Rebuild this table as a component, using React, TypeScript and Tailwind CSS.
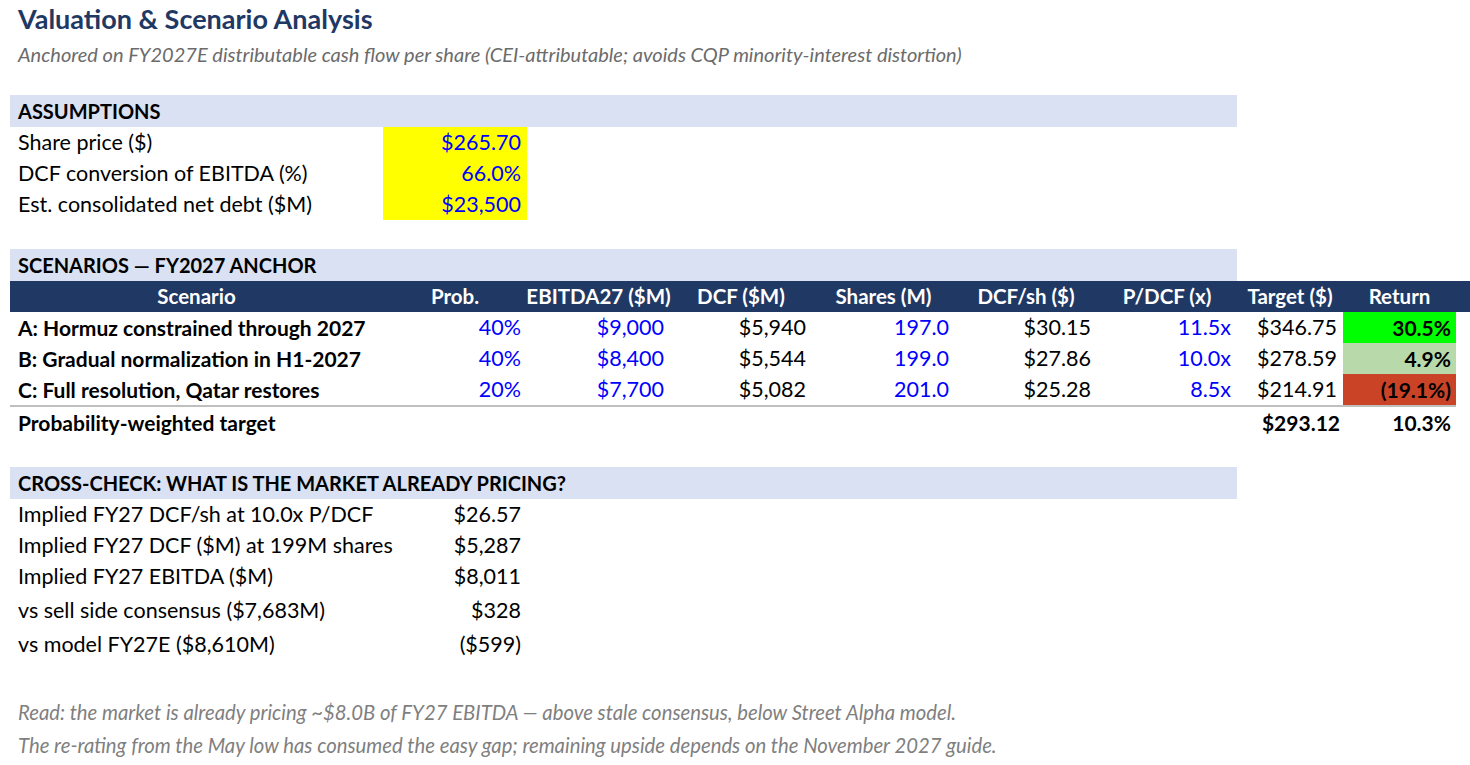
import React from 'react';

const cols = 'grid grid-cols-[373px_144px_143px_142px_143px_142px_140px_106px_113px]';

type Cell = { v: string; blue?: boolean };

const scenarios: { name: string; cells: Cell[]; ret: string; retBg: string }[] = [
  {
    name: 'A: Hormuz constrained through 2027',
    cells: [
      { v: '40%', blue: true },
      { v: '$9,000', blue: true },
      { v: '$5,940' },
      { v: '197.0', blue: true },
      { v: '$30.15' },
      { v: '11.5x', blue: true },
      { v: '$346.75' },
    ],
    ret: '30.5%',
    retBg: 'bg-[#00ff00]',
  },
  {
    name: 'B: Gradual normalization in H1-2027',
    cells: [
      { v: '40%', blue: true },
      { v: '$8,400', blue: true },
      { v: '$5,544' },
      { v: '199.0', blue: true },
      { v: '$27.86' },
      { v: '10.0x', blue: true },
      { v: '$278.59' },
    ],
    ret: '4.9%',
    retBg: 'bg-[#b8d9aa]',
  },
  {
    name: 'C: Full resolution, Qatar restores',
    cells: [
      { v: '20%', blue: true },
      { v: '$7,700', blue: true },
      { v: '$5,082' },
      { v: '201.0', blue: true },
      { v: '$25.28' },
      { v: '8.5x', blue: true },
      { v: '$214.91' },
    ],
    ret: '(19.1%)',
    retBg: 'bg-[#cb4327]',
  },
];

const headers = ['Scenario', 'Prob.', 'EBITDA27 ($M)', 'DCF ($M)', 'Shares (M)', 'DCF/sh ($)', 'P/DCF (x)', 'Target ($)', 'Return'];

const assumptions = [
  { label: 'Share price ($)', value: '$265.70' },
  { label: 'DCF conversion of EBITDA (%)', value: '66.0%' },
  { label: 'Est. consolidated net debt ($M)', value: '$23,500' },
];

const crossCheck = [
  { label: 'Implied FY27 DCF/sh at 10.0x P/DCF', value: '$26.57', h: 'h-[31px]' },
  { label: 'Implied FY27 DCF ($M) at 199M shares', value: '$5,287', h: 'h-[31px]' },
  { label: 'Implied FY27 EBITDA ($M)', value: '$8,011', h: 'h-[32px]' },
  { label: 'vs sell side consensus ($7,683M)', value: '$328', h: 'h-[35px]' },
  { label: 'vs model FY27E ($8,610M)', value: '($599)', h: 'h-[34px]' },
];

const Band: React.FC<{ title: string }> = ({ title }) => (
  <div className="w-[1227px] h-[32px] bg-[#d9e1f2] flex items-center pl-2 text-[20px] font-bold text-black">{title}</div>
);

export default function App() {
  return (
    <div className="w-[1470px] h-[765px] bg-white pl-[10px] text-[21.5px] leading-none text-black font-['Lato','Liberation_Sans',sans-serif] tabular-nums whitespace-nowrap overflow-hidden">
      {/* Title */}
      <div className="h-[38px] flex items-end pl-2 pb-[6px] text-[27px] font-bold text-[#1f3864]">
        Valuation &amp; Scenario Analysis
      </div>
      <div className="h-[32px] flex items-center pl-2 text-[20px] italic text-[#6b6b6b]">
        Anchored on FY2027E distributable cash flow per share (CEI-attributable; avoids CQP minority-interest distortion)
      </div>

      {/* Assumptions */}
      <div className="mt-[25px]">
        <Band title="ASSUMPTIONS" />
        {assumptions.map((a) => (
          <div key={a.label} className="flex h-[31px]">
            <div className="w-[373px] flex items-center pl-2">{a.label}</div>
            <div className="w-[144px] flex items-center justify-end pr-[6px] bg-[#ffff00] text-[#0000ff]">{a.value}</div>
          </div>
        ))}
      </div>

      {/* Scenarios */}
      <div className="mt-[29px]">
        <Band title="SCENARIOS — FY2027 ANCHOR" />
        <div className={`${cols} h-[31px] bg-[#203864] text-white text-[20.5px] font-bold`}>
          {headers.map((h) => (
            <div key={h} className="flex items-center justify-center">{h}</div>
          ))}
        </div>
        {scenarios.map((s) => (
          <div key={s.name} className={`${cols} h-[31px]`}>
            <div className="flex items-center pl-2 text-[21px] font-bold">{s.name}</div>
            {s.cells.map((c, i) => (
              <div key={i} className={`flex items-center justify-end pr-[6px] ${c.blue ? 'text-[#0000ff]' : 'text-black'}`}>
                {c.v}
              </div>
            ))}
            <div className={`flex items-center justify-end pr-[5px] text-[21px] font-bold ${s.retBg}`}>{s.ret}</div>
          </div>
        ))}
        <div className="w-[1446px] h-[2px] bg-[#bfbfbf]" />
        <div className={`${cols} h-[31px] text-[21px] font-bold`}>
          <div className="col-span-7 flex items-center pl-2">Probability-weighted target</div>
          <div className="flex items-center justify-end pr-[3px]">$293.12</div>
          <div className="flex items-center justify-end pr-[5px]">10.3%</div>
        </div>
      </div>

      {/* Cross-check */}
      <div className="mt-[29px]">
        <Band title="CROSS-CHECK: WHAT IS THE MARKET ALREADY PRICING?" />
        {crossCheck.map((r) => (
          <div key={r.label} className={`flex ${r.h}`}>
            <div className="w-[373px] flex items-center pl-2">{r.label}</div>
            <div className="w-[144px] flex items-center justify-end pr-[6px]">{r.value}</div>
          </div>
        ))}
      </div>

      {/* Notes */}
      <div className="mt-[34px] text-[20.3px] italic text-[#7f7f7f]">
        <div className="h-[33px] flex items-center pl-2">
          Read: the market is already pricing ~$8.0B of FY27 EBITDA — above stale consensus, below Street Alpha model.
        </div>
        <div className="h-[33px] flex items-center pl-2">
          The re-rating from the May low has consumed the easy gap; remaining upside depends on the November 2027 guide.
        </div>
      </div>
    </div>
  );
}
